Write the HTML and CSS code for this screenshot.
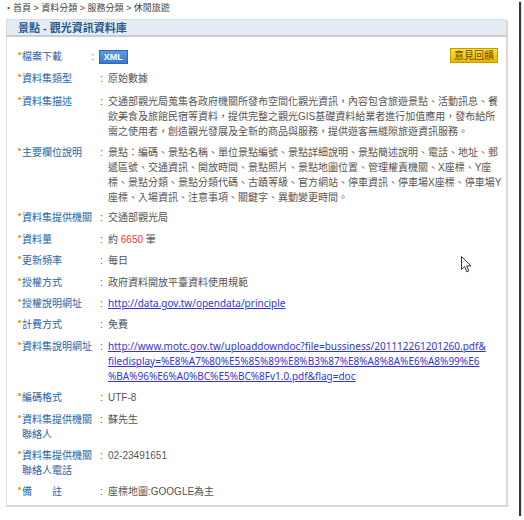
FILE: index.html
```html
<!DOCTYPE html>
<html lang="zh-Hant">
<head>
    <meta charset="UTF-8">
    <title>景點 - 觀光資訊資料庫</title>
    <link rel="stylesheet" href="styles.css">
</head>
<body>
    <div class="shot">
        <div class="crumb">‧首頁 &gt; 資料分類 &gt; 服務分類 &gt; 休閒旅遊</div>

        <div class="panel">
            <div class="panel-title">景點 - 觀光資訊資料庫</div>
            <div class="panel-body">
                <a href="#" class="feedback">意見回饋</a>

                <div class="row loose">
                    <div class="label">檔案下載</div>
                    <div class="colon">:</div>
                    <div class="value"><a href="#" class="xml">XML</a></div>
                </div>
                <div class="row loose">
                    <div class="label">資料集類型</div>
                    <div class="colon">:</div>
                    <div class="value">原始數據</div>
                </div>
                <div class="row">
                    <div class="label">資料集描述</div>
                    <div class="colon">:</div>
                    <div class="value">交通部觀光局蒐集各政府機關所發布空間化觀光資訊，內容包含旅遊景點、活動訊息、餐飲美食及旅館民宿等資料，提供完整之觀光GIS基礎資料給業者進行加值應用，發布給所需之使用者，創造觀光發展及全新的商品與服務，提供遊客無縫隙旅遊資訊服務。</div>
                </div>
                <div class="row tight">
                    <div class="label">主要欄位說明</div>
                    <div class="colon">:</div>
                    <div class="value">景點：編碼、景點名稱、單位景點編號、景點詳細說明、景點簡述說明、電話、地址、郵遞區號、交通資訊、開放時間、景點照片、景點地圖位置、管理權責機關、X座標、Y座標、景點分類、景點分類代碼、古蹟等級、官方網站、停車資訊、停車場X座標、停車場Y座標、入場資訊、注意事項、關鍵字、異動變更時間。</div>
                </div>
                <div class="row">
                    <div class="label">資料集提供機關</div>
                    <div class="colon">:</div>
                    <div class="value">交通部觀光局</div>
                </div>
                <div class="row">
                    <div class="label">資料量</div>
                    <div class="colon">:</div>
                    <div class="value">約 <span class="count">6650</span> 筆</div>
                </div>
                <div class="row">
                    <div class="label">更新頻率</div>
                    <div class="colon">:</div>
                    <div class="value">每日</div>
                </div>
                <div class="row">
                    <div class="label">授權方式</div>
                    <div class="colon">:</div>
                    <div class="value">政府資料開放平臺資料使用規範</div>
                </div>
                <div class="row">
                    <div class="label">授權說明網址</div>
                    <div class="colon">:</div>
                    <div class="value"><a href="#" class="link">http://data.gov.tw/opendata/principle</a></div>
                </div>
                <div class="row">
                    <div class="label">計費方式</div>
                    <div class="colon">:</div>
                    <div class="value">免費</div>
                </div>
                <div class="row">
                    <div class="label">資料集說明網址</div>
                    <div class="colon">:</div>
                    <div class="value"><a href="#" class="link">http://www.motc.gov.tw/uploaddowndoc?file=bussiness/201112261201260.pdf&amp;<br>filedisplay=%E8%A7%80%E5%85%89%E8%B3%87%E8%A8%8A%E6%A8%99%E6<br>%BA%96%E6%A0%BC%E5%BC%8Fv1.0.pdf&amp;flag=doc</a></div>
                </div>
                <div class="row">
                    <div class="label">編碼格式</div>
                    <div class="colon">:</div>
                    <div class="value">UTF-8</div>
                </div>
                <div class="row">
                    <div class="label">資料集提供機關聯絡人</div>
                    <div class="colon">:</div>
                    <div class="value">蘇先生</div>
                </div>
                <div class="row">
                    <div class="label">資料集提供機關聯絡人電話</div>
                    <div class="colon">:</div>
                    <div class="value">02-23491651</div>
                </div>
                <div class="row">
                    <div class="label">備　　註</div>
                    <div class="colon">:</div>
                    <div class="value">座標地圖:GOOGLE為主</div>
                </div>
            </div>
        </div>

        <!-- mouse pointer caught in the screenshot -->
        <svg class="pointer" width="11" height="17" viewBox="0 0 11 17">
            <path d="M0.5 0.5 L0.5 13.5 L3.6 10.6 L5.8 15.8 L7.8 14.9 L5.7 9.9 L10 9.9 Z" fill="#fff" stroke="#333" stroke-width="1"/>
        </svg>
    </div>
</body>
</html>
```

FILE: styles.css
```css
/* page frame */
body {
    margin: 0;
    background: #fff;
    font-family: "Liberation Sans", "Noto Sans CJK TC", sans-serif;
    text-autospace: no-autospace;
}

.shot {
    position: relative;
    width: 519px;
    height: 516px;
    background: #fff;
    box-shadow: 2px 2px 1px #3a3a3a;
    overflow: hidden;
}

.crumb {
    font-size: 9px;
    line-height: 12px;
    color: #444;
    padding: 2px 0 0 4px;
    height: 17px;
}

.panel {
    margin-left: 6px;
    width: 499px;
    border-left: 1px solid #dcdcdc;
    border-right: 2px solid #d8d8d8;
    border-bottom: 2px solid #d8d8d8;
    border-top-right-radius: 4px;
}

.panel-title {
    background: #e4ebf4;
    border-top: 1px solid #d6dde6;
    border-bottom: 2px solid #c9cdd2;
    border-top-right-radius: 4px;
    color: #2b5a8e;
    font-weight: bold;
    font-size: 11px;
    line-height: 14px;
    padding: 1px 0 0 11px;
    height: 14px;
}

.panel-body {
    padding: 8.5px 0 2.5px 15px;
}

.feedback {
    float: right;
    margin: 2px 8px 0 0;
    padding: 0 3px;
    height: 13px;
    line-height: 13px;
    font-size: 10px;
    color: #6e4b00;
    text-decoration: none;
    background: linear-gradient(#fbe33a, #e8b800);
    border: 1px solid #c99a00;
}

.row {
    display: flex;
    font-size: 10px;
    line-height: 15px;
    padding: 3px 0 3.4px;
}

.row.loose {
    padding-bottom: 4.6px;
}

.row.tight {
    padding-bottom: 2.4px;
}

.label {
    position: relative;
    width: 76px;
    color: #2563a8;
}

.label::before {
    content: "";
    position: absolute;
    left: -4px;
    top: 3px;
    width: 3px;
    height: 3px;
    border-radius: 50%;
    background: #f39a12;
}

.colon {
    width: 10px;
    color: #555;
    padding-left: 2px;
    box-sizing: border-box;
}

.value {
    width: 395px;
    color: #555;
}

.count {
    color: #ff3333;
}

.xml {
    display: inline-block;
    padding: 0 4px;
    line-height: 12px;
    font-size: 9px;
    font-weight: bold;
    color: #fff;
    text-decoration: none;
    background: linear-gradient(#5b9ce0, #3b7ccc);
    border: 1px solid #2e6ab4;
}

.link {
    color: #3333dd;
    font-family: "Noto Sans", sans-serif;
    font-size: 10px;
}

.pointer {
    position: absolute;
    left: 461px;
    top: 256px;
}
```
